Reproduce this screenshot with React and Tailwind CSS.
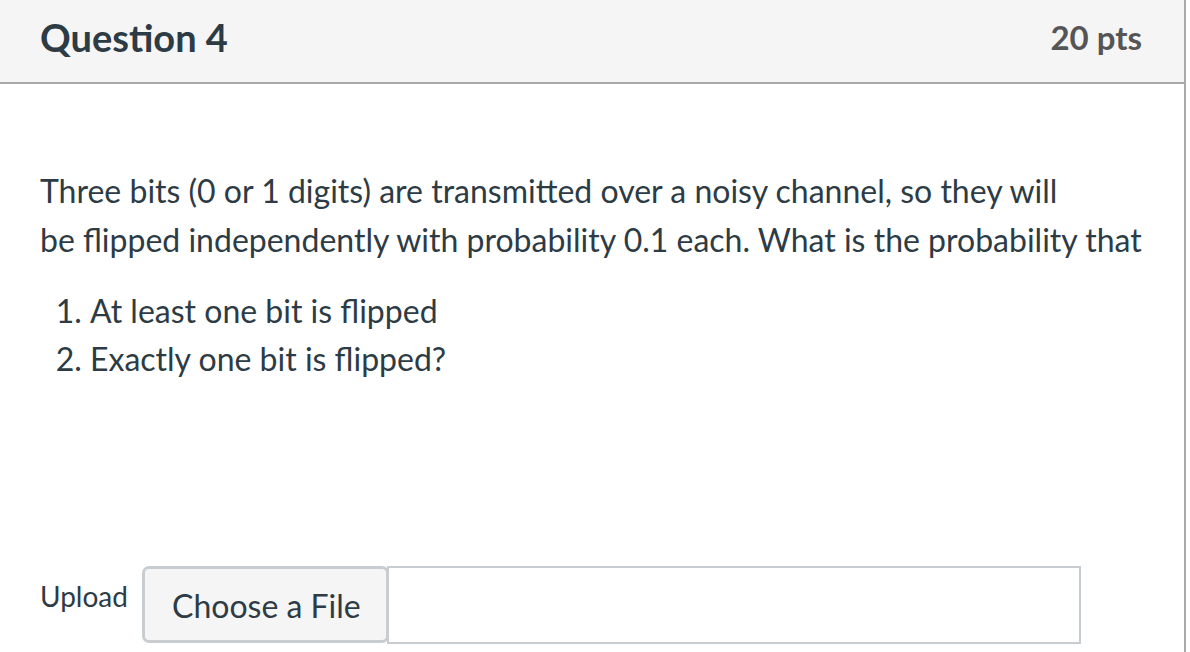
import React from 'react';

const App = () => {
  return (
    <div className="min-h-screen bg-white font-['Lato',sans-serif] text-[#2d3b45]">
      <div className="w-[1186px] min-h-[652px] border-r-2 border-[#a9a9a9]">
        {/* Header */}
        <div className="h-[84px] bg-[#f5f5f5] border-b-2 border-[#a9a9a9] flex justify-between items-start pl-[40px] pr-[42px] pt-[15px]">
          <h2 className="text-[38px] leading-[44px] font-bold text-[#2d3b45]">Question 4</h2>
          <span className="mt-[2px] text-[33px] leading-[40px] font-bold text-[#555]">20 pts</span>
        </div>

        {/* Body */}
        <div className="pl-[40px] pr-[40px] pt-[82px]">
          <p className="text-[32px] leading-[49px]">
            Three bits (0 or 1 digits) are transmitted over a noisy channel, so they will
            <br />
            be flipped independently with probability 0.1 each. What is the probability that
          </p>
          <ol className="list-decimal pl-[50px] mt-[23px] text-[32px] leading-[48px]">
            <li>At least one bit is flipped</li>
            <li>Exactly one bit is flipped?</li>
          </ol>

          {/* Upload */}
          <div className="flex items-start mt-[183px]">
            <span className="w-[102px] pt-[16px] text-[28px] leading-[28px]">Upload</span>
            <div className="flex">
              <button className="w-[247px] h-[77px] bg-[#f5f5f5] border-[3px] border-[#c7cdd1] rounded-[7px] pl-[27px] pt-[3px] text-left text-[32px] text-[#2d3b45] relative z-10">
                Choose a File
              </button>
              <div className="w-[694px] h-[78px] border-2 border-[#c7cdd1] -ml-[2px] bg-white"></div>
            </div>
          </div>
        </div>
      </div>
    </div>
  );
};

export default App;
